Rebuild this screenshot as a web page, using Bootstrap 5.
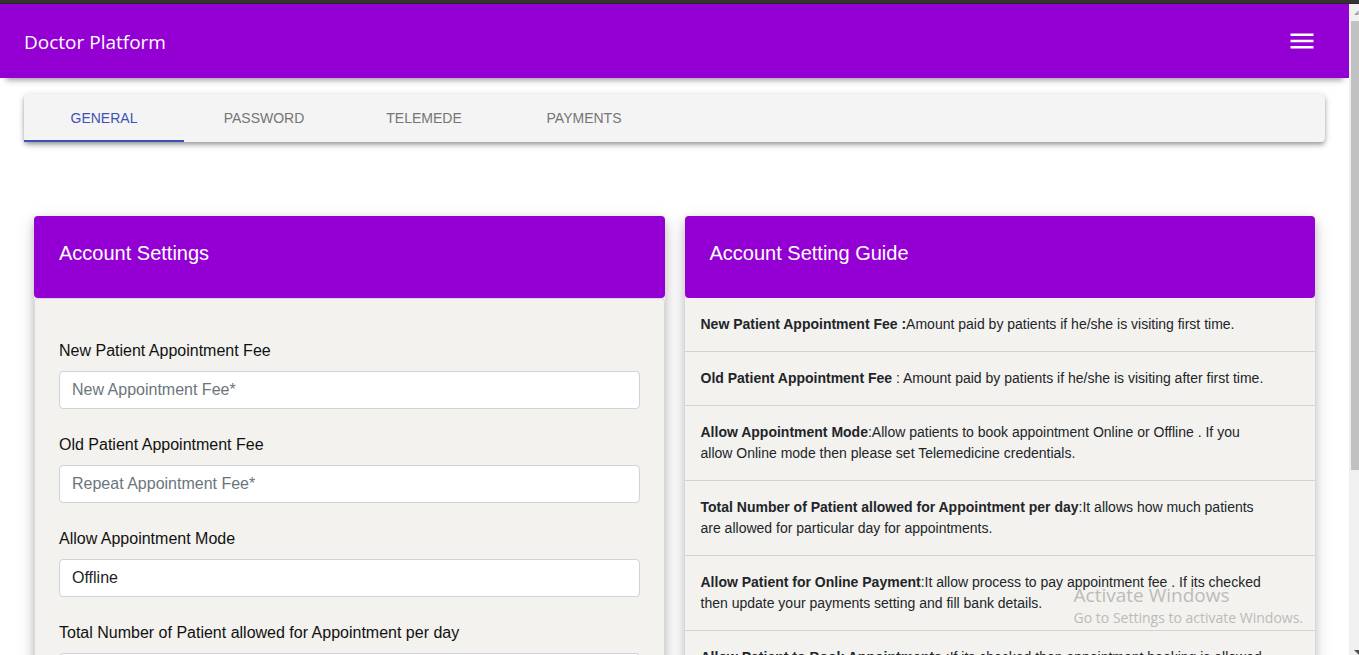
<!DOCTYPE html>
<html lang="en">
<head>
<meta charset="utf-8">
<meta name="viewport" content="width=device-width, initial-scale=1">
<title>Doctor Platform</title>
<link href="https://cdn.jsdelivr.net/npm/bootstrap@5.3.0/dist/css/bootstrap.min.css" rel="stylesheet">
<style>
  :root { --brand: #9400d3; --panel: #f3f2ee; }
  body { font-family: "Liberation Sans", Arial, sans-serif; color: #212529; }
  .window-edge { height: 4px; background: #333; border-bottom: 1px solid #2b2433; }
  .app-bar { background: var(--brand); min-height: 74px; padding: 2px 32px 0 24px; box-shadow: 0 8px 6px -6px #999; }
  .app-bar .brand-name { font-family: "Open Sans", "Noto Sans", sans-serif; font-size: 19px; line-height: 28px; color: #fff; }
  .menu-btn svg { display: block; }
  .page-body { padding: 16px 24px 0; }
  .tab-bar { background: #f4f4f4; border-radius: 4px; box-shadow: 0 2px 4px -1px rgba(0,0,0,.3), 0 4px 5px 0 rgba(0,0,0,.14), 0 1px 8px 0 rgba(0,0,0,.12); }
  .tab-bar .nav-link { width: 160px; height: 48px; padding: 2px 0 0; font-size: 14px; line-height: 24px; color: #757575; border-radius: 0; border-bottom: 2px solid transparent; }
  .tab-bar .nav-link.active { color: #3f51b5; border-bottom-color: #3f51b5; }
  .settings-grid { padding: 74px 10px 0; gap: 20px; }
  .panel { background: var(--panel); border-radius: 4px; box-shadow: 0 4px 8px rgba(0,0,0,.2), 0 6px 20px rgba(0,0,0,.14); flex: 1 1 0; min-width: 0; }
  .panel-head { background: var(--brand); border-radius: 4px; padding: 25px; font-size: 20px; line-height: 32px; padding: 21px 25px 29px; color: #fff; margin: 0; font-weight: 400; }
  .panel-form { border: 1px solid #d8d8d6; border-radius: 4px; padding: 40px 24px 24px; }
  .field { margin-bottom: 24px; }
  .field label { color: #111; margin-bottom: 8px; display: block; line-height: 24px; }
  .field .form-control { border: 1px solid #ced4da; border-radius: 4px; height: 38px; }
  .field .form-control::placeholder { color: #6c757d; }
  .guide-item { padding: 16px; font-size: 14px; line-height: 21px; border-bottom: 1px solid #d3d3d1; }
  .scroll-track { width: 10px; background: #f0f0f0; padding-left: 2px; }
  .scroll-track .thumb { background: #c1c1c1; height: 69%; margin: 5px 0 0; }
  .watermark { right: 56px; bottom: 27px; color: #bcbbb9; font-family: "Open Sans", "Noto Sans", sans-serif; pointer-events: none; }
  .watermark .wm-title { font-size: 19px; line-height: 26px; }
  .watermark .wm-note { font-size: 14px; line-height: 20px; }
</style>
</head>
<body class="vh-100 overflow-hidden d-flex flex-column position-relative">
<div class="window-edge flex-shrink-0"></div>
<div class="d-flex flex-grow-1 overflow-hidden">
  <div class="flex-grow-1 overflow-hidden">
    <header class="app-bar d-flex align-items-center justify-content-between">
      <span class="brand-name">Doctor Platform</span>
      <button class="menu-btn btn border-0 p-0" type="button" aria-label="Menu">
        <svg width="30" height="30" viewBox="0 0 30 30" fill="#fff"><path d="M3.500 6.500h23v2.500h-23zM3.500 12.800h23v2.400h-23zM3.500 19h23v2.500h-23z"/></svg>
      </button>
    </header>
    <main class="page-body">
      <nav class="nav tab-bar text-uppercase">
        <a class="nav-link active d-flex align-items-center justify-content-center" href="#general">General</a>
        <a class="nav-link d-flex align-items-center justify-content-center" href="#password">Password</a>
        <a class="nav-link d-flex align-items-center justify-content-center" href="#telemede">Telemede</a>
        <a class="nav-link d-flex align-items-center justify-content-center" href="#payments">Payments</a>
      </nav>
      <div class="settings-grid d-flex">
        <section class="panel">
          <h2 class="panel-head">Account Settings</h2>
          <form class="panel-form">
            <div class="field"><label for="newFee">New Patient Appointment Fee</label><input class="form-control" id="newFee" type="text" placeholder="New Appointment Fee*"></div>
            <div class="field"><label for="oldFee">Old Patient Appointment Fee</label><input class="form-control" id="oldFee" type="text" placeholder="Repeat Appointment Fee*"></div>
            <div class="field"><label for="mode">Allow Appointment Mode</label><select class="form-control" id="mode"><option>Offline</option><option>Online</option></select></div>
            <div class="field"><label for="total">Total Number of Patient allowed for Appointment per day</label><input class="form-control" id="total" type="text"></div>
          </form>
        </section>
        <section class="panel">
          <h2 class="panel-head">Account Setting Guide</h2>
          <div class="guide-item"><b>New Patient Appointment Fee :</b>Amount paid by patients if he/she is visiting first time.</div>
          <div class="guide-item"><b>Old Patient Appointment Fee</b> : Amount paid by patients if he/she is visiting after first time.</div>
          <div class="guide-item"><b>Allow Appointment Mode</b>:Allow patients to book appointment Online or Offline . If you<br>allow Online mode then please set Telemedicine credentials.</div>
          <div class="guide-item"><b>Total Number of Patient allowed for Appointment per day</b>:It allows how much patients<br>are allowed for particular day for appointments.</div>
          <div class="guide-item"><b>Allow Patient for Online Payment</b>:It allow process to pay appointment fee . If its checked<br>then update your payments setting and fill bank details.</div>
          <div class="guide-item"><b>Allow Patient to Book Appointments</b> :If its checked then appointment booking is allowed</div>
        </section>
      </div>
    </main>
  </div>
  <div class="scroll-track flex-shrink-0 d-flex flex-column" aria-hidden="true">
    <svg width="8" height="12" viewBox="0 0 8 12"><path d="M3 11l4.500-4.500V11z" fill="#a3a3a3"/></svg>
    <div class="thumb"></div>
    <svg class="mt-auto" width="8" height="6" viewBox="0 0 8 6"><path d="M3 1h5v5z" fill="#505050"/></svg>
  </div>
</div>
<aside class="watermark position-absolute">
  <div class="wm-title">Activate Windows</div>
  <div class="wm-note">Go to Settings to activate Windows.</div>
</aside>
<script src="https://cdn.jsdelivr.net/npm/bootstrap@5.3.0/dist/js/bootstrap.bundle.min.js"></script>
</body>
</html>
